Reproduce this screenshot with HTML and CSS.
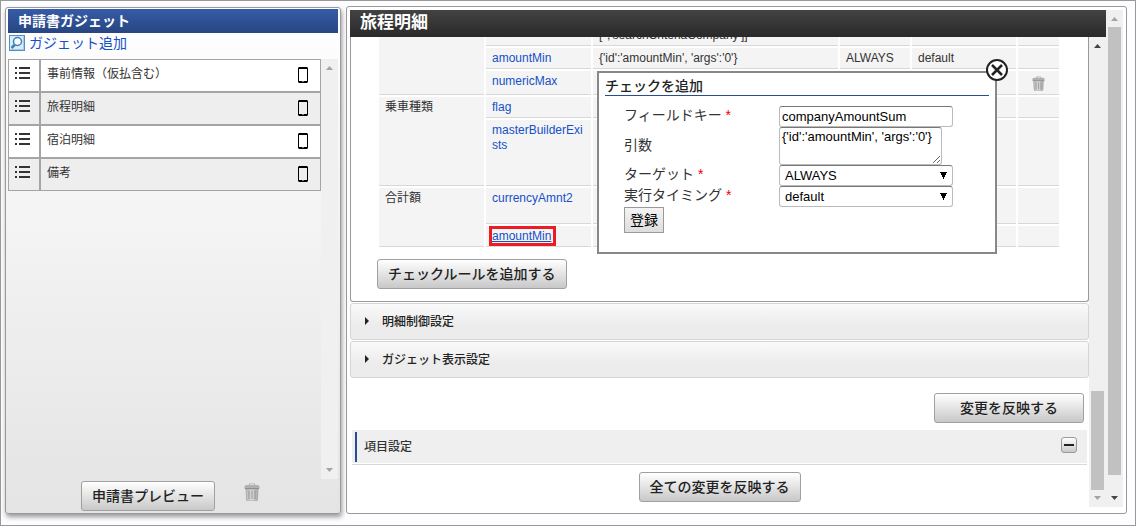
FILE: index.html
```html
<!DOCTYPE html>
<html lang="ja">
<head>
<meta charset="utf-8">
<title>申請書ガジェット</title>
<link rel="stylesheet" href="styles.css">
</head>
<body>
<svg width="0" height="0" class="defs" aria-hidden="true">
  <defs>
    <linearGradient id="metal" x1="0" x2="1" y1="0" y2="0"><stop offset="0" stop-color="#bbb"/><stop offset=".5" stop-color="#dcdcdc"/><stop offset="1" stop-color="#a8a8a8"/></linearGradient>
    <symbol id="list" viewBox="0 0 15 12"><path d="M0 0h2v2H0zM0 5h2v2H0zM0 10h2v2H0zM4 0h11v2H4zM4 5h11v2H4zM4 10h11v2H4z" fill="#333"/></symbol>
    <symbol id="phone" viewBox="0 0 10 16"><path fill-rule="evenodd" d="M1 0h8l1 1v14l-1 1H1l-1-1V1zM1 2v12h8V2z" fill="#000"/><path d="M4 14h2v1H4z" fill="#777"/></symbol>
    <symbol id="trash" viewBox="0 0 16 18"><path d="M5 2V.5h6V2h3l1.500 1v2.500H.5V3L2 2z" fill="#b0b0b0"/><path d="M6 1h4v1H6z" fill="#ddd"/><path d="M1 5h14v1H1z" fill="#8c8c8c"/><path d="M2 6h12l-.5 11-1 1h-9l-1-1z" fill="url(#metal)" stroke="#999" stroke-width=".6"/><path d="M5 7.500v8.500M8 7.500v8.500M11 7.500v8.500" stroke="#8c8c8c" stroke-width=".9"/></symbol>
    <symbol id="up" viewBox="0 0 7 4"><path d="M0 4L3.500 0 7 4z"/></symbol>
    <symbol id="down" viewBox="0 0 7 4"><path d="M0 0h7L3.500 4z"/></symbol>
  </defs>
</svg>
<div class="app">
  <aside class="side">
    <h2 class="side-title">申請書ガジェット</h2>
    <a class="add" href="#"><svg width="16" height="16" viewBox="0 0 16 16"><rect x=".5" y=".5" width="15" height="15" fill="#dcebf8" stroke="#4f90c2"/><path d="M1.500 14.500h13v-13" fill="none" stroke="#a5c8e4"/><path d="M6 9.500L2.500 13" stroke="#3d80b8" stroke-width="2.500"/><circle cx="8.500" cy="6.500" r="4" fill="#f8fcff" stroke="#3d80b8" stroke-width="1.500"/></svg>ガジェット追加</a>
    <div class="side-body">
      <ul class="gadgets">
        <li><span class="grip"><svg width="15" height="12"><use href="#list"/></svg></span><span class="name">事前情報（仮払含む）<svg width="10" height="16"><use href="#phone"/></svg></span></li>
        <li><span class="grip"><svg width="15" height="12"><use href="#list"/></svg></span><span class="name">旅程明細<svg width="10" height="16"><use href="#phone"/></svg></span></li>
        <li><span class="grip"><svg width="15" height="12"><use href="#list"/></svg></span><span class="name">宿泊明細<svg width="10" height="16"><use href="#phone"/></svg></span></li>
        <li><span class="grip"><svg width="15" height="12"><use href="#list"/></svg></span><span class="name">備考<svg width="10" height="16"><use href="#phone"/></svg></span></li>
      </ul>
      <div class="bar"><svg class="off" width="7" height="4"><use href="#up"/></svg><svg class="off" width="7" height="4"><use href="#down"/></svg></div>
    </div>
    <div class="side-foot"><button class="btn" type="button">申請書プレビュー</button><svg width="16" height="18"><use href="#trash"/></svg></div>
  </aside>

  <main class="main">
    <div class="content">
      <h1 class="title">旅程明細</h1>
      <div class="scroller">
        <div class="pane">
          <section class="rules">
            <table class="checks">
              <colgroup><col class="c-key"><col class="c-key"><col><col class="c-target"><col class="c-timing"><col class="c-del"></colgroup>
              <tbody>
                <tr><td rowspan="3"></td><td></td><td>['','searchCriteriaCompany']]</td><td></td><td></td><td></td></tr>
                <tr><td><a href="#">amountMin</a></td><td>{'id':'amountMin', 'args':'0'}</td><td>ALWAYS</td><td>default</td><td></td></tr>
                <tr class="r-24"><td><a href="#">numericMax</a></td><td></td><td></td><td></td><td class="del"><svg width="13" height="15"><use href="#trash"/></svg></td></tr>
                <tr><td rowspan="2">乗車種類</td><td><a href="#">flag</a></td><td></td><td></td><td></td><td></td></tr>
                <tr class="r-66"><td><a href="#">masterBuilderExists</a></td><td></td><td></td><td></td><td></td></tr>
                <tr class="r-36"><td rowspan="2">合計額</td><td><a href="#">currencyAmnt2</a></td><td></td><td></td><td></td><td></td></tr>
                <tr><td><a class="marked" href="#">amountMin</a></td><td></td><td></td><td></td><td></td></tr>
              </tbody>
            </table>
            <button class="btn" type="button">チェックルールを追加する</button>
          </section>
          <button class="fold" type="button"><svg width="4" height="8" viewBox="0 0 4 8"><path d="M0 0l4 4-4 4z" fill="#222"/></svg>明細制御設定</button>
          <button class="fold" type="button"><svg width="4" height="8" viewBox="0 0 4 8"><path d="M0 0l4 4-4 4z" fill="#222"/></svg>ガジェット表示設定</button>
          <div class="apply"><button class="btn wide" type="button">変更を反映する</button></div>
          <div class="items"><h3>項目設定</h3><button class="minus" type="button" aria-label="閉じる"></button></div>
          <div class="apply-all"><button class="btn" type="button">全ての変更を反映する</button></div>
        </div>
        <div class="bar inner"><svg width="7" height="4"><use href="#up"/></svg><span class="thumb"></span><svg class="off" width="7" height="4"><use href="#down"/></svg></div>
      </div>
    </div>
    <div class="bar outer"><svg class="off" width="7" height="4"><use href="#up"/></svg><span class="thumb"></span><svg width="7" height="4"><use href="#down"/></svg></div>

    <form class="dialog">
      <h2>チェックを追加</h2>
      <div class="fields">
        <label for="key">フィールドキー <em>*</em></label><input id="key" type="text" value="companyAmountSum">
        <label for="args">引数</label><textarea id="args">{'id':'amountMin', 'args':'0'}</textarea>
        <label for="target">ターゲット <em>*</em></label><select id="target"><option>ALWAYS</option></select>
        <label for="timing">実行タイミング <em>*</em></label><select id="timing"><option>default</option></select>
      </div>
      <button class="submit" type="button">登録</button>
      <button class="close" type="button" aria-label="閉じる"><svg width="24" height="24" viewBox="0 0 24 24"><circle cx="12" cy="12" r="10" fill="#fff" stroke="#222" stroke-width="2"/><path d="M7 7l10 10M17 7L7 17" stroke="#222" stroke-width="2.500"/></svg></button>
    </form>
  </main>
</div>
</body>
</html>
```
FILE: styles.css
```css
* { box-sizing: border-box; }
body { margin: 0; font: 12px/15px "Liberation Sans", "Noto Sans CJK JP", sans-serif; color: #333; }
button, input, select, textarea { font-family: inherit; margin: 0; }
h1, h2, h3, ul { margin: 0; padding: 0; }
a { color: #1550c8; text-decoration: none; }
svg { display: block; flex: none; }
.defs { position: absolute; }

.app { display: flex; gap: 5px; height: 100vh; min-height: 526px; padding: 5px 8px 11px 4px; border: 1px solid #999; background: #fdfdff; }

.side { display: flex; flex-direction: column; flex: 0 0 336px; margin-top: 1px; padding: 1px 2px; border: 1px solid #999; border-radius: 3px; background: linear-gradient(#fff, #e4e4e4); box-shadow: 1px 3px 5px rgba(0, 0, 0, .4); }
.side-title { height: 24px; padding-left: 10px; font-size: 14px; line-height: 24px; color: #fff; background: linear-gradient(#365ca8, #274580); }
.add { display: flex; align-items: center; gap: 4px; height: 20px; margin-bottom: 6px; padding-left: 1px; font-size: 14px; line-height: 20px; }
.side-body { display: flex; flex: 1; }
.gadgets { flex: 1; list-style: none; }
.gadgets li { display: flex; height: 33px; background: #fff; }
.gadgets li:nth-child(even) { background: #eee; }
.grip { width: 32px; padding: 7px 0 0 6px; border: 1px solid #a5a5a5; }
.name { display: flex; flex: 1; justify-content: space-between; padding: 7px 12px 0 6px; border: 1px solid #a5a5a5; }
.side-foot { display: flex; gap: 29px; height: 33px; padding: 2px 0 0 73px; }
.side-foot svg { margin-top: 2px; }

.bar { display: flex; flex-direction: column; flex: 0 0 17px; align-items: center; justify-content: space-between; padding: 7px 0; background: #f0f0f0; fill: #444; }
.bar .off { fill: #a3a3a3; }
.thumb { width: 13px; background: #c1c1c1; }

.btn { height: 30px; padding: 0 10px; border: 1px solid #a0a0a0; border-radius: 3px; font-size: 14px; font-weight: 500; line-height: 20px; color: #222; background: linear-gradient(#fff, #c8c8c8); }
.wide { width: 150px; }

.main { position: relative; display: flex; flex: 1; min-width: 0; padding: 3px 3px 6px 3px; border: 1px solid #999; border-radius: 3px; background: #fff; }
.content { display: flex; flex: 1; flex-direction: column; min-width: 0; }
.title { height: 27px; padding-left: 10px; font-size: 17px; line-height: 25px; color: #fff; background: linear-gradient(#434343, #292929); }
.scroller { display: flex; flex: 1; min-height: 0; }
.pane { flex: 1; min-width: 0; overflow: hidden; }
.inner .thumb { height: 99px; margin: auto 0 6px; }
.outer .thumb { flex: 1; margin: 6px 0 21px; }

.rules { margin-bottom: 1px; padding: 0 27px 12px 26px; border: 1px solid #999; border-top: 0; border-radius: 0 0 3px 3px; }
.checks { width: 100%; margin: -14px 0 10px; table-layout: fixed; border-spacing: 2px; }
.c-key { width: 105px; }
.c-target { width: 70px; }
.c-timing { width: 104px; }
.c-del { width: 41px; }
.checks tr { height: 21px; }
.checks .r-24 { height: 24px; }
.checks .r-36 { height: 36px; }
.checks .r-66 { height: 66px; }
.checks td { padding: 3px 6px 2px; border-bottom: 1px solid #d8d8d8; vertical-align: top; overflow-wrap: anywhere; background: #f4f4f4; }
.checks .del { padding: 5px 0 0 14px; }
.marked { padding-right: 2px; outline: 3px solid #ed1c24; text-decoration: underline; }

.fold { display: flex; align-items: center; gap: 13px; width: 100%; height: 37px; margin-bottom: 1px; padding: 0 14px 2px; border: 1px solid #d5d5d5; border-radius: 3px; font-size: 12px; font-weight: 500; color: #222; background: linear-gradient(#fafafa, #ececec 60%, #ececec); }
.apply { padding: 14px 5px 7px; text-align: right; }
.items { display: flex; align-items: center; justify-content: space-between; height: 35px; margin: 0 2px; padding: 2px 10px 3px 3px; border-bottom: 1px solid #d8d8d8; background: linear-gradient(#efefef 33px, #fff 33px); }
.items h3 { padding-left: 7px; border-left: 2px solid #2b4c93; font-size: 12px; font-weight: 500; line-height: 30px; }
.minus { display: flex; align-items: center; justify-content: center; width: 16px; height: 16px; margin-bottom: 4px; padding: 0; border: 1px solid #999; border-radius: 3px; background: linear-gradient(#fff, #c8c8c8); }
.minus::before { content: ""; width: 10px; height: 2px; background: #222; }
.apply-all { padding-top: 7px; text-align: center; }

.dialog { position: absolute; top: 64px; right: 129px; width: 400px; height: 183px; padding: 3px 6px; border: 2px solid #888; background: #fff; }
.dialog h2 { height: 20px; border-bottom: 1px solid #2b4c93; font-size: 14px; font-weight: 500; line-height: 20px; color: #222; }
.fields { display: grid; grid-template-columns: 155px 174px; align-items: center; padding: 10px 0 0 19px; }
.fields label { padding-bottom: 3px; font-size: 14px; line-height: 18px; }
.fields em { color: #e00; font-style: normal; }
.fields input, .fields select { height: 21px; padding: 0 2px; border: 1px solid #bbb; border-top-color: #777; border-radius: 3px; font-size: 13px; line-height: 18px; color: #000; background: #fff; }
.fields textarea { width: 163px; height: 38px; padding: 0 2px; border: 1px solid #bbb; border-top-color: #777; border-radius: 3px; font-size: 13px; line-height: 18px; white-space: pre; color: #000; background: #fff; overflow: hidden; }
.fields select { appearance: none; padding: 0 5px; background-image: conic-gradient(from -27deg at 50% 100%, #000 54deg, transparent 0); background-repeat: no-repeat; background-position: right 5px center; background-size: 7px 7px; }
.submit { height: 26px; margin-left: 19px; padding: 0 5px; border: 1px solid #999; font-size: 14px; line-height: 20px; color: #000; background: linear-gradient(#f4f4f4, #ddd); }
.close { position: absolute; top: -15px; right: -14px; padding: 0; border: 0; background: none; }
```
